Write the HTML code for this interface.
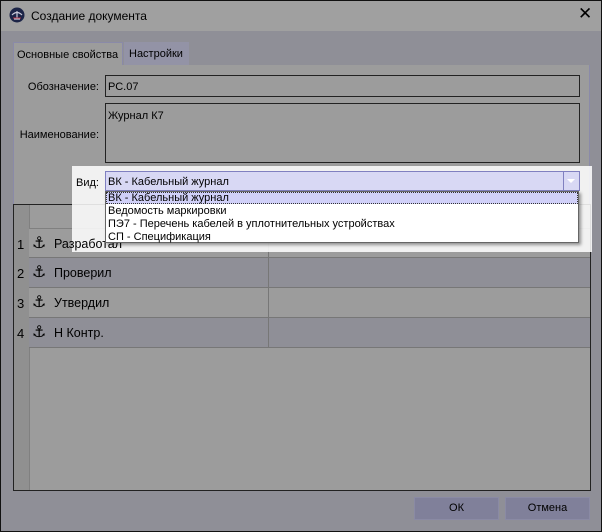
<!DOCTYPE html>
<html><head><meta charset="utf-8"><style>
*{margin:0;padding:0;box-sizing:border-box}
body{width:602px;height:532px;overflow:hidden;font-family:"Liberation Sans","DejaVu Sans",sans-serif;font-size:11px;color:#000;background:#8f8f97;position:relative}
.a{position:absolute}
.r{font-size:12.5px}
.n{font-size:13px}
.k{font-size:16px;line-height:16px}
</style></head><body>
<div class="a" style="left:0;top:0;width:602px;height:532px;border:1px solid #111;background:#8f8f97"></div>
<div class="a" style="left:1px;top:1px;width:600px;height:30px;background:#a0a0a0"></div>
<svg class="a" style="left:9px;top:7px" width="16" height="16" viewBox="0 0 16 16"><circle cx="8" cy="8" r="7.5" fill="#1c2447"/><path d="M3 8 Q8 3 13 8 M8 4 V12 M5 12 H11" stroke="#c8c8d8" stroke-width="1.2" fill="none"/><path d="M4 11 H12" stroke="#b03040" stroke-width="1"/></svg>
<div class="a" style="left:31px;top:9px;font-size:12px">Создание документа</div>
<div class="a" style="left:578px;top:4px;font-size:17px">✕</div>

<div class="a" style="left:13px;top:42px;width:110px;height:24px;background:#9c9c9c;border:1px solid #8a8aa8;border-bottom:none"></div>
<div class="a" style="left:17px;top:49px">Основные свойства</div>
<div class="a" style="left:124px;top:42px;width:65px;height:23px;background:#9393a6"></div>
<div class="a" style="left:129px;top:48px">Настройки</div>
<div class="a" style="left:13px;top:65px;width:577px;height:140px;background:#9c9c9c;border-left:1px solid #8a8aa8;border-right:1px solid #8a8aa8"></div>

<div class="a" style="left:20px;top:81px;width:79px;text-align:right">Обозначение:</div>
<div class="a" style="left:105px;top:75px;width:475px;height:22px;border:1px solid #222;background:#9c9c9c"></div>
<div class="a" style="left:108px;top:81px">РС.07</div>
<div class="a" style="left:10px;top:129px;width:89px;text-align:right">Наименование:</div>
<div class="a" style="left:105px;top:103px;width:475px;height:60px;border:1px solid #222;background:#9c9c9c"></div>
<div class="a" style="left:108px;top:110px">Журнал К7</div>

<div class="a" style="left:13px;top:204px;width:578px;height:287px;border:1px solid #222;background:#9c9c9c"></div>
<div class="a" style="left:14px;top:205px;width:15px;height:285px;background:#909090"></div>
<div class="a" style="left:29px;top:205px;width:1px;height:285px;background:#808080"></div>
<div class="a" style="left:29px;top:228px;width:561px;height:1px;background:#808080"></div>
<div class="a" style="left:29px;top:229px;width:561px;height:29px;background:#9c9c9c;border-bottom:1px solid #777"></div>
<div class="a" style="left:29px;top:258px;width:561px;height:30px;background:#8f8f97;border-bottom:1px solid #777"></div>
<div class="a" style="left:29px;top:288px;width:561px;height:30px;background:#9c9c9c;border-bottom:1px solid #777"></div>
<div class="a" style="left:29px;top:318px;width:561px;height:30px;background:#8f8f97;border-bottom:1px solid #777"></div>
<div class="a" style="left:268px;top:229px;width:1px;height:119px;background:#777"></div>

<div class="a" style="left:72px;top:166px;width:520px;height:86px;background:rgba(255,255,255,0.86)"></div>

<div class="a n" style="left:17px;top:237px">1</div>
<div class="a n" style="left:17px;top:266px">2</div>
<div class="a n" style="left:17px;top:296px">3</div>
<div class="a n" style="left:17px;top:326px">4</div>
<div class="a k" style="left:32px;top:236px">⚓</div>
<div class="a k" style="left:32px;top:265px">⚓</div>
<div class="a k" style="left:32px;top:295px">⚓</div>
<div class="a k" style="left:32px;top:325px">⚓</div>
<div class="a r" style="left:54px;top:237px">Разработал</div>
<div class="a r" style="left:54px;top:266px">Проверил</div>
<div class="a r" style="left:54px;top:296px">Утвердил</div>
<div class="a r" style="left:54px;top:326px">Н Контр.</div>

<div class="a" style="left:76px;top:177px">Вид:</div>
<div class="a" style="left:105px;top:171px;width:475px;height:20px;background:#d8d8f4;border:1px solid #8080c0"></div>
<div class="a" style="left:563px;top:172px;width:16px;height:18px;border-left:1px solid #8080c0"></div>
<div class="a" style="left:567px;top:179px;width:0;height:0;border-left:4px solid transparent;border-right:4px solid transparent;border-top:4px solid #fff"></div>
<div class="a" style="left:108px;top:176px">ВК - Кабельный журнал</div>
<div class="a" style="left:105px;top:191px;width:474px;height:52px;background:#fff;border:1px solid #666;box-shadow:2px 2px 3px rgba(0,0,0,0.4)"></div>
<div class="a" style="left:106px;top:192px;width:472px;height:12px;background:#d0d0f8;border:1px dotted #333"></div>
<div class="a" style="left:108px;top:192px">ВК - Кабельный журнал</div>
<div class="a" style="left:108px;top:205px">Ведомость маркировки</div>
<div class="a" style="left:108px;top:218px">ПЭ7 - Перечень кабелей в уплотнительных устройствах</div>
<div class="a" style="left:108px;top:231px">СП - Спецификация</div>

<div class="a" style="left:414px;top:497px;width:85px;height:23px;background:#80809a;border:1px solid #8a8aa4;text-align:center;line-height:21px">ОК</div>
<div class="a" style="left:505px;top:497px;width:85px;height:23px;background:#80809a;border:1px solid #8a8aa4;text-align:center;line-height:21px">Отмена</div>
</body></html>
